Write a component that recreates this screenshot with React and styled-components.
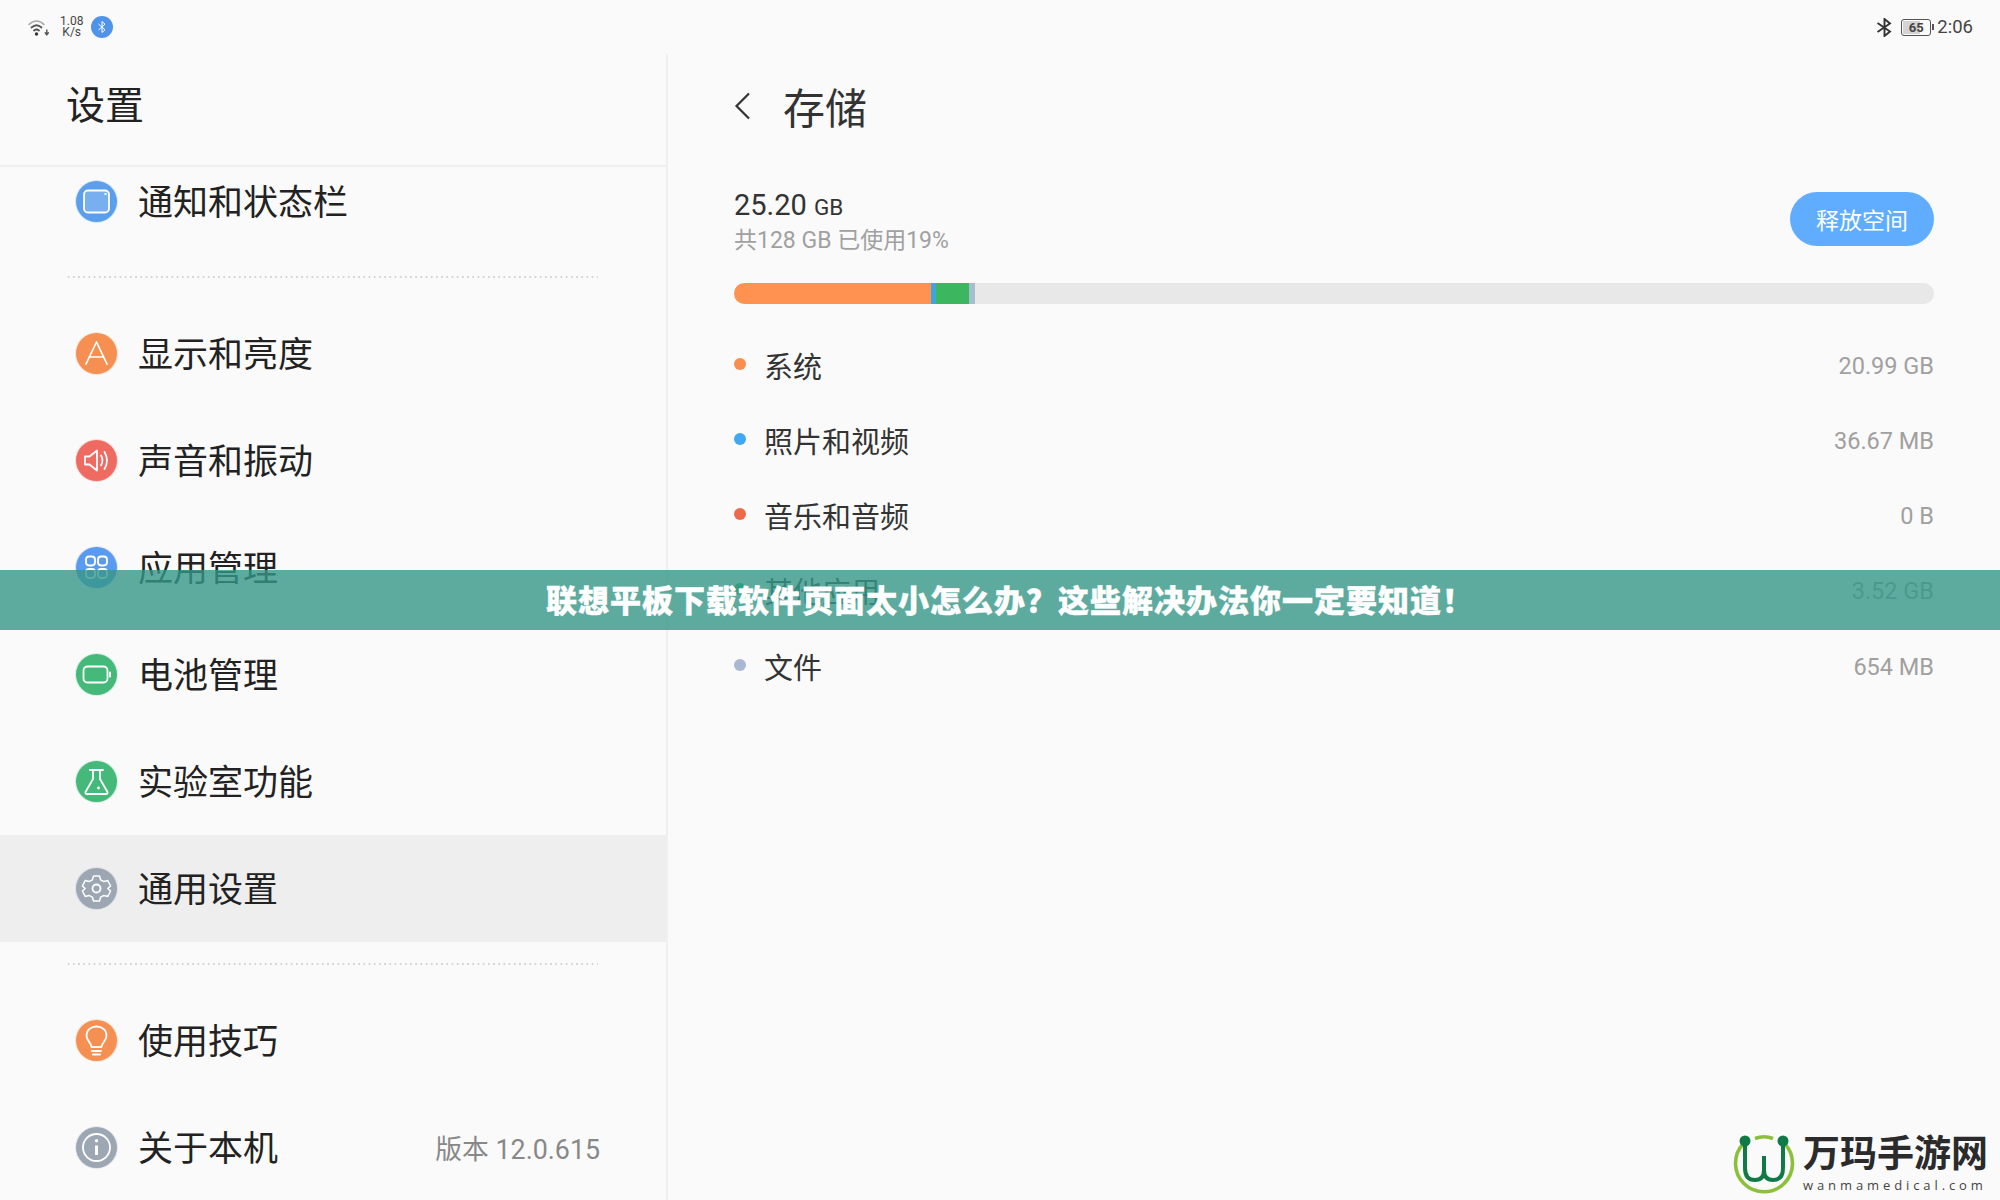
import React from 'react';
import styled, { createGlobalStyle } from 'styled-components';

const FONT = `Roboto, "Noto Sans CJK SC", sans-serif`;

const menuGroups = [
  [{ name: '通知和状态栏', color: '#5a9eec', icon: 'notice' }],
  [
    { name: '显示和亮度', color: '#f58f52', icon: 'display' },
    { name: '声音和振动', color: '#ef6b62', icon: 'sound' },
    { name: '应用管理', color: '#5b9bef', icon: 'apps' },
    { name: '电池管理', color: '#45b97a', icon: 'battery' },
    { name: '实验室功能', color: '#45b97a', icon: 'lab' },
    { name: '通用设置', color: '#9da6b3', icon: 'gear', active: true },
  ],
  [
    { name: '使用技巧', color: '#f58f52', icon: 'tips' },
    { name: '关于本机', color: '#9da6b3', icon: 'info', extra: '版本 12.0.615' },
  ],
];

const storageItems = [
  { name: '系统', size: '20.99 GB', color: '#fb8d50' },
  { name: '照片和视频', size: '36.67 MB', color: '#3fa9f5' },
  { name: '音乐和音频', size: '0 B', color: '#ec6a4b' },
  { name: '其他应用', size: '3.52 GB', color: '#2fb36a' },
  { name: '文件', size: '654 MB', color: '#a9b9d3' },
];

const usageBar = [
  { width: 197, color: '#ff9250' },
  { width: 5, color: '#3aa6e0' },
  { width: 33, color: '#3cb65f' },
  { width: 6, color: '#a4c0cf' },
];

function MenuGlyph({ name }) {
  const common = { fill: 'none', stroke: '#fff', strokeWidth: 1.8, strokeLinecap: 'round', strokeLinejoin: 'round' };
  return (
    <svg width="41" height="41" viewBox="0 0 41 41" {...common}>
      {name === 'notice' && (
        <>
          <rect x="8" y="9.5" width="25" height="22" rx="4" fill="#fff" fillOpacity="0.18" />
          <rect x="28.5" y="12" width="2" height="2" fill="#fff" stroke="none" />
        </>
      )}
      {name === 'display' && <path d="M10 31 L20.5 9 L31 31 M14 24 H27" strokeWidth="1.7" />}
      {name === 'sound' && (
        <>
          <path d="M9 16.5 H13.5 L21 10.5 V30.5 L13.5 24.5 H9 Z" />
          <path d="M25 15.5 Q28 20.5 25 25.5 M28.5 12 Q33.5 20.5 28.5 29" />
        </>
      )}
      {name === 'apps' && (
        <>
          <rect x="10" y="9.5" width="9" height="9" rx="3.2" />
          <rect x="22" y="9.5" width="9" height="9" rx="3.2" />
          <rect x="10" y="22" width="9" height="9" rx="3.2" />
          <rect x="22" y="22" width="9" height="9" rx="3.2" />
        </>
      )}
      {name === 'battery' && (
        <>
          <rect x="7.5" y="12.5" width="24" height="16" rx="4" />
          <path d="M34 18.5 V22.5" strokeWidth="2" />
        </>
      )}
      {name === 'lab' && (
        <>
          <path d="M14 9 H27 M17 9 V18 L9.5 31 Q9 33 11 33 H30 Q32 33 31.5 31 L24 18 V9" />
          <circle cx="22.5" cy="27" r="1.4" fill="#fff" stroke="none" />
        </>
      )}
      {name === 'gear' && (
        <>
          <path d="M17.5 8 H23.5 L24.6 11.8 L28 13.6 L31.8 12.6 L34.6 18 L31.8 20.5 L34.6 23 L31.8 28.4 L28 27.4 L24.6 29.2 L23.5 33 H17.5 L16.4 29.2 L13 27.4 L9.2 28.4 L6.4 23 L9.2 20.5 L6.4 18 L9.2 12.6 L13 13.6 L16.4 11.8 Z" strokeWidth="1.5" />
          <circle cx="20.5" cy="20.5" r="4" />
        </>
      )}
      {name === 'tips' && (
        <>
          <path d="M15.5 27 C15.5 23 10.5 21 10.5 15.5 C10.5 10 15 6.5 20.5 6.5 C26 6.5 30.5 10 30.5 15.5 C30.5 21 25.5 23 25.5 27 Z" />
          <path d="M16 31 H25 M17 34.5 H24" strokeWidth="2" />
        </>
      )}
      {name === 'info' && (
        <>
          <circle cx="20.5" cy="20.5" r="13.5" />
          <circle cx="20.5" cy="13.8" r="1.7" fill="#fff" stroke="none" />
          <path d="M20.5 18.5 V28" strokeWidth="3" strokeLinecap="butt" />
        </>
      )}
    </svg>
  );
}

function App() {
  return (
    <>
      <GlobalStyle />
      <Page>
        <StatusBar>
          <StatusGroup>
            <svg width="21" height="17" viewBox="0 0 21 17" fill="none" stroke="#555" strokeLinecap="round">
              <path d="M1 5.5 Q8.5 -1.5 16 5.5" strokeWidth="1.6" stroke="#aaa" />
              <path d="M3.5 8.5 Q8.5 4 13.5 8.5" strokeWidth="1.8" />
              <path d="M6 11.5 Q8.5 9.5 11 11.5" strokeWidth="1.8" />
              <circle cx="8.5" cy="15" r="1.7" fill="#333" stroke="none" />
              <path d="M18.8 11 V15.5 M17.2 13.8 L18.8 15.8 L20.4 13.8" strokeWidth="1.4" />
            </svg>
            <NetSpeed>
              <span>1.08</span>
              <span>K/s</span>
            </NetSpeed>
            <BlueBadge>
              <svg width="10" height="14" viewBox="0 0 10 14" fill="none" stroke="#fff" strokeWidth="1">
                <path d="M1.5 4 L8 9.8 L5 12.5 V1.5 L8 4.2 L1.5 10" />
              </svg>
            </BlueBadge>
          </StatusGroup>
          <StatusGroup>
            <BluetoothMark width="17" height="19" viewBox="0 0 17 19" fill="none" stroke="#333" strokeWidth="1.9">
              <path d="M1.5 5 L14 13.5 L8.5 18 V1 L14 5.5 L1.5 14" />
            </BluetoothMark>
            <BatteryBox>
              <BatteryFill />
              <BatteryValue>65</BatteryValue>
            </BatteryBox>
            <ClockText>2:06</ClockText>
          </StatusGroup>
        </StatusBar>

        <Columns>
          <SidePanel>
            <SideHeader>设置</SideHeader>
            <MenuList>
              {menuGroups.map((group, i) => (
                <MenuGroup key={i}>
                  {group.map((item) => (
                    <MenuRow key={item.name} $active={item.active}>
                      <MenuIcon $color={item.color}>
                        <MenuGlyph name={item.icon} />
                      </MenuIcon>
                      <MenuName>{item.name}</MenuName>
                      {item.extra && <MenuExtra>{item.extra}</MenuExtra>}
                    </MenuRow>
                  ))}
                </MenuGroup>
              ))}
            </MenuList>
          </SidePanel>

          <MainPanel>
            <TitleBar>
              <svg width="17" height="28" viewBox="0 0 17 28" fill="none" stroke="#333" strokeWidth="2.2">
                <path d="M15 1.5 L2.5 14 L15 26.5" />
              </svg>
              <PageTitle>存储</PageTitle>
            </TitleBar>

            <Summary>
              <div>
                <UsedValue>
                  25.20 <small>GB</small>
                </UsedValue>
                <UsedNote>共128 GB 已使用19%</UsedNote>
              </div>
              <FreeButton>释放空间</FreeButton>
            </Summary>

            <UsageTrack>
              {usageBar.map((part) => (
                <UsagePart key={part.color} $color={part.color} $width={part.width} />
              ))}
            </UsageTrack>

            <StorageList>
              {storageItems.map((item) => (
                <StorageRow key={item.name}>
                  <StorageDot $color={item.color} />
                  <StorageName>{item.name}</StorageName>
                  <StorageSize>{item.size}</StorageSize>
                </StorageRow>
              ))}
            </StorageList>
          </MainPanel>
        </Columns>

        <Banner>联想平板下载软件页面太小怎么办？这些解决办法你一定要知道！</Banner>

        <Logo>
          <svg width="66" height="66" viewBox="0 0 66 66" fill="none">
            <path d="M12 12 A28.5 28.5 0 1 0 54 12" stroke="#8cc03c" strokeWidth="3.6" />
            <path d="M24 6.5 Q33 3 42 6.5" stroke="#8cc03c" strokeWidth="3.6" />
            <path d="M14 9 V36 Q14 48 24 48 Q33 48 33 38 V24 M33 38 Q33 48 42 48 Q52 48 52 36 V9" stroke="#0f7a45" strokeWidth="4" />
            <circle cx="14" cy="9" r="5.5" fill="#0f7a45" />
            <circle cx="52" cy="9" r="5.5" fill="#0f7a45" />
          </svg>
          <LogoText>
            <LogoName>万玛手游网</LogoName>
            <LogoSite>wanmamedical.com</LogoSite>
          </LogoText>
        </Logo>
      </Page>
    </>
  );
}

export default App;

const GlobalStyle = createGlobalStyle`
  html, body {
    margin: 0;
    padding: 0;
    background: #fafafa;
  }
  * {
    box-sizing: border-box;
  }
`;

const Page = styled.div`
  position: relative;
  display: flex;
  flex-direction: column;
  width: 2000px;
  height: 1200px;
  overflow: hidden;
  background: #fafafa;
  font-family: ${FONT};
`;

const StatusBar = styled.div`
  display: flex;
  flex: none;
  height: 54px;
  padding: 0 27px 0 28px;
  justify-content: space-between;
  align-items: center;
`;

const StatusGroup = styled.div`
  display: flex;
  align-items: center;
  gap: 10px;
`;

const NetSpeed = styled.div`
  display: flex;
  flex-direction: column;
  align-items: center;
  margin-left: 1px;
  font-size: 12px;
  line-height: 11px;
  color: #444;
`;

const BlueBadge = styled.div`
  display: flex;
  width: 22px;
  height: 22px;
  margin-left: -2px;
  border-radius: 50%;
  background: #4f94ea;
  justify-content: center;
  align-items: center;
`;

const BluetoothMark = styled.svg`
  margin-right: -2px;
`;

const BatteryBox = styled.div`
  position: relative;
  display: flex;
  width: 30px;
  height: 17px;
  border: 1.5px solid #555;
  border-radius: 3px;
  justify-content: center;
  align-items: center;
  &::after {
    content: '';
    position: absolute;
    right: -4px;
    top: 4px;
    width: 2px;
    height: 6px;
    background: #555;
  }
`;

const BatteryFill = styled.div`
  position: absolute;
  left: 1px;
  top: 1px;
  bottom: 1px;
  width: 17px;
  background: #d4d4d4;
`;

const BatteryValue = styled.span`
  position: relative;
  font-size: 13px;
  font-weight: 700;
  color: #444;
`;

const ClockText = styled.span`
  margin-left: -4px;
  font-size: 18.5px;
  color: #444;
`;

const Columns = styled.div`
  display: flex;
  flex: 1;
  min-height: 0;
`;

const SidePanel = styled.aside`
  display: flex;
  flex: none;
  flex-direction: column;
  width: 668px;
  border-right: 2px solid #f0f0f0;
`;

const SideHeader = styled.div`
  flex: none;
  height: 113px;
  padding: 0 0 4px 66px;
  border-bottom: 2px solid #eeeeee;
  font-size: 39px;
  line-height: 104px;
  color: #222;
`;

const MenuList = styled.div`
  flex: 1;
  min-height: 0;
  margin-top: -19px;
`;

const MenuGroup = styled.div`
  & + & {
    position: relative;
    margin-top: 45px;
    &::before {
      content: '';
      position: absolute;
      left: 66px;
      right: 68px;
      top: -24px;
      height: 2px;
      background-image: radial-gradient(circle, #d4d4d4 1px, transparent 1.2px);
      background-size: 5.2px 2px;
    }
  }
`;

const MenuRow = styled.div`
  display: flex;
  height: 107px;
  padding: 0 66px 0 76px;
  align-items: center;
  background: ${(props) => (props.$active ? '#eeeeee' : 'transparent')};
`;

const MenuIcon = styled.div`
  flex: none;
  width: 41px;
  height: 41px;
  border-radius: 50%;
  background: ${(props) => props.$color};
  box-shadow: 0 0 0 1px ${(props) => props.$color}33;
`;

const MenuName = styled.span`
  margin-left: 21px;
  padding-top: 4px;
  font-size: 35px;
  line-height: 48px;
  color: #222;
`;

const MenuExtra = styled.span`
  margin-left: auto;
  font-size: 26.8px;
  color: #888;
`;

const MainPanel = styled.main`
  flex: 1;
  min-width: 0;
  padding: 0 66px 0 66px;
`;

const TitleBar = styled.div`
  display: flex;
  height: 112px;
  padding-bottom: 9px;
  align-items: center;
  gap: 32px;
`;

const PageTitle = styled.h1`
  margin: 0;
  font-size: 42px;
  font-weight: 400;
  color: #333;
`;

const Summary = styled.div`
  display: flex;
  margin-top: 21px;
  justify-content: space-between;
  align-items: flex-start;
`;

const UsedValue = styled.div`
  font-size: 29px;
  line-height: 36px;
  color: #333;
  small {
    font-size: 22.5px;
  }
`;

const UsedNote = styled.div`
  margin-top: 1px;
  font-size: 23px;
  line-height: 30px;
  color: #a0a0a0;
`;

const FreeButton = styled.button`
  width: 144px;
  height: 54px;
  margin-top: 5px;
  padding: 0;
  border: 0;
  border-radius: 27px;
  background: #60adff;
  font-family: ${FONT};
  font-size: 23px;
  color: #fff;
`;

const UsageTrack = styled.div`
  display: flex;
  height: 21px;
  margin-top: 27px;
  border-radius: 10.5px;
  background: #e8e8e8;
  overflow: hidden;
`;

const UsagePart = styled.div`
  flex: none;
  width: ${(props) => props.$width}px;
  background: ${(props) => props.$color};
`;

const StorageList = styled.div`
  margin-top: 22px;
`;

const StorageRow = styled.div`
  display: flex;
  height: 75.25px;
  align-items: center;
`;

const StorageDot = styled.span`
  flex: none;
  width: 12px;
  height: 12px;
  border-radius: 50%;
  background: ${(props) => props.$color};
`;

const StorageName = styled.span`
  margin-left: 18px;
  padding-top: 2px;
  font-size: 29px;
  color: #333;
`;

const StorageSize = styled.span`
  margin-left: auto;
  padding-top: 4px;
  font-size: 23.5px;
  color: #a0a0a0;
`;

const Banner = styled.div`
  position: absolute;
  left: 0;
  right: 0;
  top: 570px;
  height: 60px;
  padding: 3px 0 0 20px;
  background: rgba(54, 151, 136, 0.8);
  font-size: 31px;
  font-weight: 900;
  letter-spacing: 1px;
  line-height: 57px;
  text-align: center;
  color: #fff;
  -webkit-text-stroke: 0.4px #fff;
`;

const Logo = styled.div`
  position: absolute;
  left: 1731px;
  top: 1132px;
  display: flex;
  align-items: flex-start;
  gap: 6px;
`;

const LogoText = styled.div`
  display: flex;
  flex-direction: column;
  padding-top: 3px;
`;

const LogoName = styled.div`
  font-size: 37px;
  font-weight: 700;
  line-height: 40px;
  color: #2b2b2b;
`;

const LogoSite = styled.div`
  margin-top: 2px;
  font-family: "Open Sans", sans-serif;
  font-size: 13px;
  letter-spacing: 3.9px;
  line-height: 16px;
  color: #444;
`;
